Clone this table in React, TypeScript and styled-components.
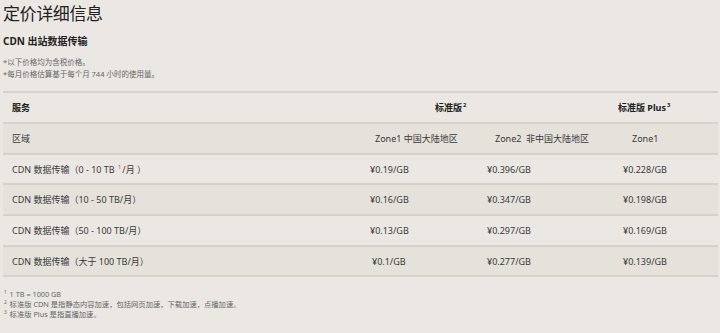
import React, { FC } from 'react';
import styled, { createGlobalStyle } from 'styled-components';

const GlobalStyle = createGlobalStyle`
	html, body {
		margin: 0;
		padding: 0;
		background: #ebe8e3;
	}
	body {
		font-family: "Noto Sans", "Noto Sans CJK SC", sans-serif;
		color: #333;
	}
`;

const Page = styled.div`
	width: 720px;
	height: 333px;
	box-sizing: border-box;
	padding: 0 2px 0 3px;
	background: #ebe8e3;
	overflow: hidden;
`;

const Title = styled.h1`
	margin: 0;
	font-size: 17px;
	line-height: 27px;
	font-weight: 400;
	color: #222;
	letter-spacing: -0.4px;
`;

const SubTitle = styled.h2`
	margin: 8px 0 0;
	font-size: 10px;
	line-height: 12px;
	font-weight: 700;
	color: #222;
`;

const Notes = styled.div`
	margin-top: 9px;
	font-size: 7.5px;
	line-height: 12px;
	color: #666;
`;

const Table = styled.div`
	margin-top: 11px;
	border-top: 2px solid #d5d2cc;
	font-size: 9px;
`;

const Row = styled.div<{ $shade?: boolean; $height: number }>`
	display: grid;
	grid-template-columns: 360px 117px 135px 1fr;
	align-items: center;
	height: ${p => p.$height}px;
	box-sizing: border-box;
	border-bottom: 2px solid #d5d2cc;
	background: ${p => (p.$shade ? '#e5e2dc' : 'transparent')};
`;

const Cell = styled.div<{ $pad: number; $bold?: boolean; $span?: number }>`
	padding-left: ${p => p.$pad}px;
	font-weight: ${p => (p.$bold ? 700 : 400)};
	color: ${p => (p.$bold ? '#222' : '#3a3a3a')};
	grid-column: span ${p => p.$span || 1};
	white-space: nowrap;
`;

const Sup = styled.sup<{ $red?: boolean }>`
	font-size: 0.65em;
	vertical-align: super;
	line-height: 0;
	color: ${p => (p.$red ? '#d0352b' : 'inherit')};
	margin: 0 1px;
`;

const Footnotes = styled.div`
	margin-top: 12px;
	font-size: 7.3px;
	line-height: 10px;
	color: #666;
`;

const rows = [
	{ label: <>CDN 数据传输（0 - 10 TB <Sup $red>1</Sup>/月 ）</>, v: ['¥0.19/GB', '¥0.396/GB', '¥0.228/GB'], pad: 7, h: 30 },
	{ label: <>CDN 数据传输（10 - 50 TB/月）</>, v: ['¥0.16/GB', '¥0.347/GB', '¥0.198/GB'], pad: 7, h: 31 },
	{ label: <>CDN 数据传输（50 - 100 TB/月）</>, v: ['¥0.13/GB', '¥0.297/GB', '¥0.169/GB'], pad: 7, h: 31 },
	{ label: <>CDN 数据传输（大于 100 TB/月）</>, v: ['¥0.1/GB', '¥0.277/GB', '¥0.139/GB'], pad: 9, h: 30 },
];

const App: FC = () => {
	return <Page>
		<GlobalStyle />
		<Title>定价详细信息</Title>
		<SubTitle>CDN 出站数据传输</SubTitle>
		<Notes>
			<div>*以下价格均为含税价格。</div>
			<div>*每月价格估算基于每个月 744 小时的使用量。</div>
		</Notes>
		<Table>
			<Row $height={31}>
				<Cell $pad={9} $bold>服务</Cell>
				<Cell $pad={72} $bold $span={2}>标准版<Sup>2</Sup></Cell>
				<Cell $pad={3} $bold>标准版 Plus<Sup>3</Sup></Cell>
			</Row>
			<Row $height={31} $shade>
				<Cell $pad={9}>区域</Cell>
				<Cell $pad={12}>Zone1 中国大陆地区</Cell>
				<Cell $pad={15}>Zone2&nbsp;&nbsp;非中国大陆地区</Cell>
				<Cell $pad={17}>Zone1</Cell>
			</Row>
			{rows.map((r, i) => (
				<Row key={i} $height={r.h} $shade={i % 2 === 1}>
					<Cell $pad={9}>{r.label}</Cell>
					<Cell $pad={r.pad}>{r.v[0]}</Cell>
					<Cell $pad={7}>{r.v[1]}</Cell>
					<Cell $pad={8}>{r.v[2]}</Cell>
				</Row>
			))}
		</Table>
		<Footnotes>
			<div><Sup>1</Sup> 1 TB = 1000 GB</div>
			<div><Sup>2</Sup> 标准版 CDN 是指静态内容加速，包括网页加速，下载加速，点播加速。</div>
			<div><Sup>3</Sup> 标准版 Plus 是指直播加速。</div>
		</Footnotes>
	</Page>;
};

export default App;
